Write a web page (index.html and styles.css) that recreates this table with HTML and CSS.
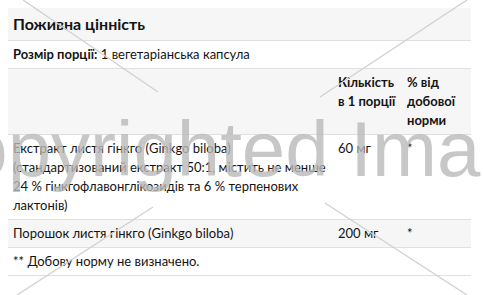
FILE: index.html
```html
<!DOCTYPE html>
<html lang="uk">
<head>
<meta charset="utf-8">
<link rel="stylesheet" href="styles.css">
</head>
<body>
<table class="facts">
  <colgroup>
    <col class="c-name">
    <col class="c-amt">
    <col class="c-dv">
  </colgroup>
  <tr class="shade">
    <th class="title" colspan="3">Поживна цінність</th>
  </tr>
  <tr>
    <td colspan="3"><b>Розмір порції:</b> 1 вегетаріанська капсула</td>
  </tr>
  <tr class="shade">
    <th></th>
    <th>Кількість в&nbsp;1&nbsp;порції</th>
    <th>% від добової норми</th>
  </tr>
  <tr>
    <td>Екстракт листя гінкго (Ginkgo biloba) (стандартизований екстракт 50:1, містить не менше 24 % гінкгофлавонглікозидів та 6 % терпенових лактонів)</td>
    <td>60 мг</td>
    <td>*</td>
  </tr>
  <tr class="shade">
    <td>Порошок листя гінкго (Ginkgo biloba)</td>
    <td>200 мг</td>
    <td>*</td>
  </tr>
  <tr>
    <td colspan="3">** Добову норму не визначено.</td>
  </tr>
</table>
<div class="watermark" aria-hidden="true">
  <svg class="wm-lines" width="483" height="295" viewBox="0 0 483 295">
    <line x1="23" y1="0" x2="158" y2="92"/>
    <line x1="467" y1="0" x2="320" y2="97"/>
    <line x1="153" y1="207" x2="17" y2="295"/>
    <line x1="325" y1="203" x2="467" y2="295"/>
  </svg>
  <div class="wm-text">Copyrighted Image</div>
</div>
</body>
</html>
```
FILE: styles.css
```css
html, body {
  margin: 0;
  padding: 0;
  background: #fff;
}
body {
  padding: 8px;
  font-family: Lato, "Noto Sans", sans-serif;
  color: #141414;
  position: relative;
  width: 483px;
  height: 295px;
  box-sizing: border-box;
  overflow: hidden;
}
.facts {
  border-collapse: collapse;
  width: 463px;
  font-size: 13px;
  line-height: 19px;
}
.c-amt { width: 69px; }
.c-dv { width: 69px; }
.facts th,
.facts td {
  padding: 4px 5px;
  text-align: left;
  vertical-align: top;
  border-bottom: 1px solid #e0e0e0;
}
.facts th {
  font-weight: 700;
}
.facts b {
  font-weight: 700;
}
.facts .title {
  font-size: 16px;
  line-height: 24px;
}
.shade th,
.shade td {
  background: #f6f6f6;
}
.watermark {
  position: absolute;
  left: 0;
  top: 0;
  width: 483px;
  height: 295px;
  pointer-events: none;
}
.wm-lines {
  position: absolute;
  left: 0;
  top: 0;
}
.wm-lines line {
  stroke: #d2d2d2;
  stroke-width: 1.4;
}
.wm-text {
  position: absolute;
  left: -92px;
  top: 104px;
  font-family: "Liberation Sans", Arial, sans-serif;
  font-size: 78px;
  line-height: 90px;
  white-space: nowrap;
  color: rgba(185, 185, 185, 0.8);
}
```
